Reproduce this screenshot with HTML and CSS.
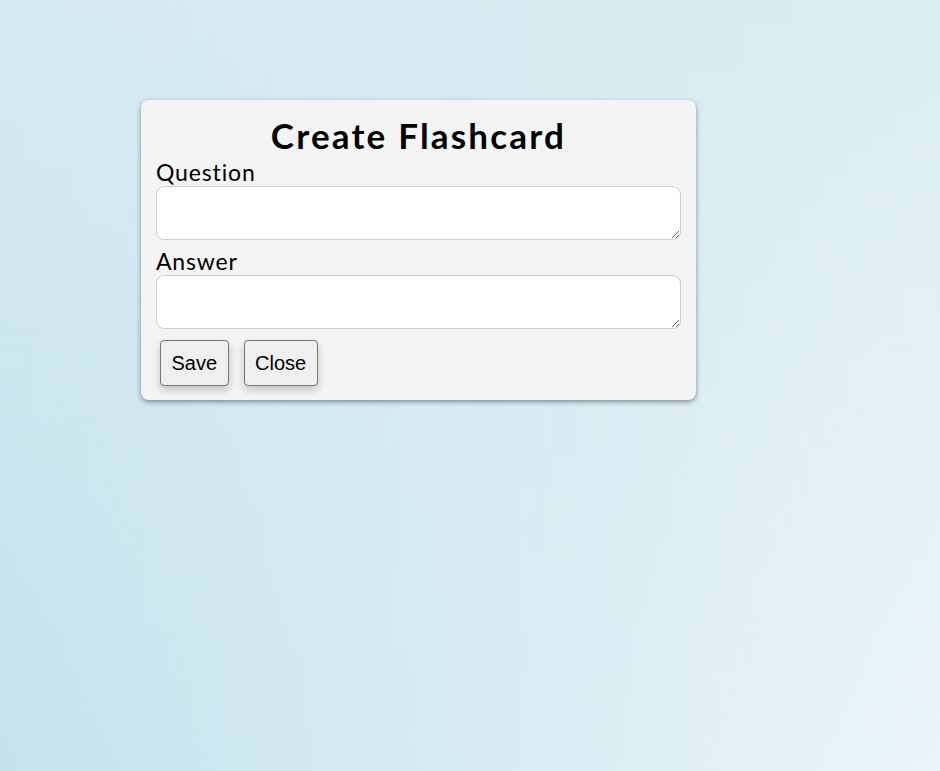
FILE: index.html
```html
<!DOCTYPE html>
<html lang="en">
<head>
<meta charset="utf-8">
<title>Create Flashcard</title>
<link rel="stylesheet" href="styles.css">
</head>
<body>
  <div class="modal">
    <h2 class="modal-title">Create Flashcard</h2>
    <label class="field-label" for="question">Question</label>
    <textarea id="question" class="field-input"></textarea>
    <label class="field-label" for="answer">Answer</label>
    <textarea id="answer" class="field-input"></textarea>
    <div class="actions">
      <button class="btn" type="button">Save</button>
      <button class="btn" type="button">Close</button>
    </div>
  </div>
</body>
</html>
```

FILE: styles.css
```css
html, body {
  height: 100%;
}

body {
  margin: 0;
  padding: 100px 0 0 141px;
  box-sizing: border-box;
  font-family: "Lato", "Open Sans", sans-serif;
  background:
    linear-gradient(to bottom, rgba(215, 235, 241, 0.8), rgba(215, 235, 241, 0)),
    linear-gradient(to right, #c4e3ec, #e9f4f9);
}

.modal {
  width: 555px;
  box-sizing: border-box;
  padding: 15px 15px 14px;
  background: #f4f4f4;
  border-radius: 8px;
  box-shadow: 0 2px 5px rgba(0, 0, 0, 0.4);
  display: flex;
  flex-direction: column;
}

.modal-title {
  margin: 0 0 4px;
  font-size: 35px;
  line-height: 40px;
  letter-spacing: 2.2px;
  font-weight: 700;
  text-align: center;
  color: #000;
}

.field-label {
  display: block;
  font-size: 23px;
  line-height: 27px;
  letter-spacing: 0.85px;
  color: #000;
}

.field-input {
  display: block;
  width: 100%;
  height: 54px;
  box-sizing: border-box;
  margin: 0 0 8px;
  border: 1px solid #cfcfcf;
  border-radius: 8px;
  background: #fff;
  resize: vertical;
  font: 16px "Liberation Sans", Arial, sans-serif;
}

.actions {
  display: flex;
  gap: 15px;
  margin: 3px 0 0 4px;
}

.btn {
  padding: 10.5px;
  font: 20px/23px "Liberation Sans", Arial, sans-serif;
  color: #000;
  background: #efefef;
  border: 1px solid #767676;
  border-radius: 4px;
  box-shadow: 0 4px 8px rgba(0, 0, 0, 0.2);
}
```
